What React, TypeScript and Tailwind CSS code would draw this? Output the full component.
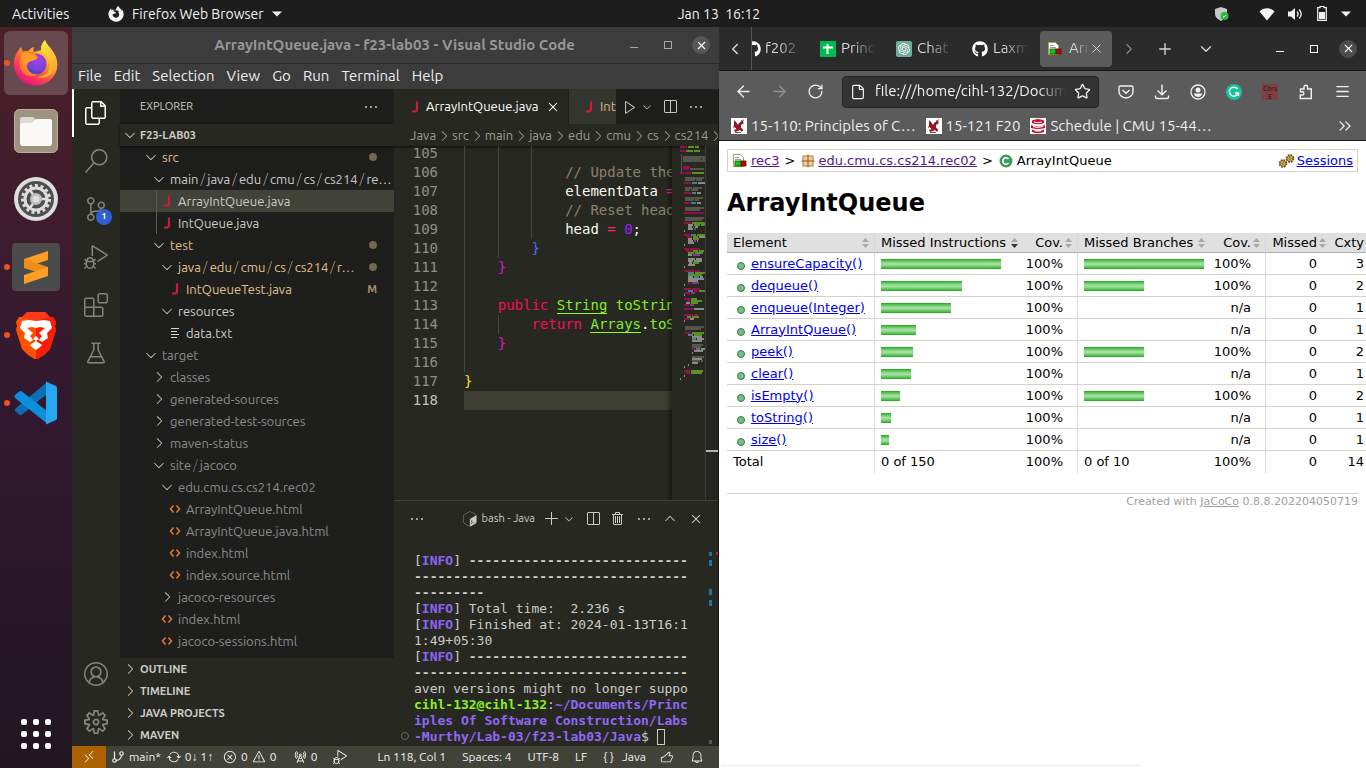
import React from "react";
import {
  VscAccount, VscAdd, VscBeaker, VscBell, VscChevronDown, VscChevronRight, VscChevronUp, VscClose,
  VscDebugAlt, VscEllipsis, VscError, VscExtensions, VscFiles, VscPlay, VscRadioTower, VscRemote, VscSearch,
  VscSettingsGear, VscSourceControl, VscSplitHorizontal, VscSync, VscTerminalBash, VscThumbsup, VscTrash, VscWarning,
} from "react-icons/vsc";
import { SiOpenai } from "react-icons/si";
import { FaFirefoxBrowser, FaGithub } from "react-icons/fa";
import {
  ArrowLeft, ArrowRight, ChevronDown, ChevronLeft, ChevronRight, ChevronsRight, Download, File, GitBranch,
  Menu, Plus, RotateCw, Star, X,
} from "lucide-react";

/* ---------- Desktop shell ---------- */

function TopBar() {
  return (
    <header className="grid h-[27px] shrink-0 grid-cols-[1fr_auto_1fr] items-center bg-[#1d1d1d] text-sm text-[#f2f2f2]">
      <div className="flex items-center pl-3">
        <button className="w-[64px] text-left">Activities</button>
        <button className="ml-8 flex items-center">
          <FaFirefoxBrowser size={16} />
          <span className="ml-2 whitespace-nowrap">Firefox Web Browser</span>
          <Caret className="ml-2" />
        </button>
      </div>
      <button className="pl-[72px] whitespace-pre">Jan 13  16:12</button>
      <div className="flex items-center justify-end pr-[15px]">
        <svg width="16" height="16" viewBox="0 0 16 16" className="mr-[29px]">
          <path d="M7 1 13 3v5c0 3-2.500 5-6 7C3.500 13 1 11 1 8V3Z" fill="#c8c8c8" />
          <circle cx="10.500" cy="10" r="4" fill="#2fb344" />
          <path d="m8.700 10 1.300 1.300 2.300-2.400" stroke="#fff" fill="none" />
        </svg>
        <svg width="16" height="14" viewBox="0 0 16 14" className="mr-3">
          <path d="M8 13.500.5 4.500C4.500.2 11.500.2 15.500 4.500Z" fill="#f2f2f2" />
        </svg>
        <svg width="16" height="14" viewBox="0 0 16 14" className="mr-[14px]">
          <path d="M1 4.500h3L8 1v12L4 9.500H1Z" fill="#f2f2f2" />
          <path d="M10 4.500c1.300 1.500 1.300 3.500 0 5M12.200 2.500c2.400 2.700 2.400 6.300 0 9" stroke="#f2f2f2" fill="none" strokeWidth="1.300" />
        </svg>
        <svg width="10" height="15" viewBox="0 0 10 15" className="mr-[14px]">
          <path d="M.7 1.700h2.300V.5h4v1.200h2.300v12.600H.7Z" stroke="#f2f2f2" fill="none" strokeWidth="1.200" />
          <path d="M2 6h6v7H2Z" fill="#f2f2f2" />
        </svg>
        <Caret />
      </div>
    </header>
  );
}

function Caret({ className = "" }: { className?: string }) {
  return (
    <svg width="10" height="6" viewBox="0 0 10 6" className={className}>
      <path d="M0 .5h10L5 5.500Z" fill="#f2f2f2" />
    </svg>
  );
}

function FirefoxLogo() {
  return (
    <svg width="46" height="48" viewBox="0 0 46 48">
      <defs>
        <linearGradient id="fx1" x1=".8" y1=".1" x2=".25" y2=".95">
          <stop offset="0" stopColor="#ffe63c" />
          <stop offset=".35" stopColor="#ffa52a" />
          <stop offset=".65" stopColor="#ff4f45" />
          <stop offset="1" stopColor="#e8107c" />
        </linearGradient>
        <radialGradient id="fx2" cx=".6" cy=".3" r=".8">
          <stop offset="0" stopColor="#a63cf0" />
          <stop offset=".6" stopColor="#7446d8" />
          <stop offset="1" stopColor="#3b3ba8" />
        </radialGradient>
        <linearGradient id="fx3" x1="0" y1="0" x2="1" y2="1">
          <stop offset="0" stopColor="#fff44f" />
          <stop offset="1" stopColor="#ff9a1f" />
        </linearGradient>
      </defs>
      <path d="M5 12 8 8l2 5c2-1 4-1 5-1 2-2 3-3 6-4-1 2-1 4 0 5l7-2c0-5 2-8 4-10 2 5 6 8 9 13 3 5 4 11 3 16A22 22 0 0 1 1 28C0 22 2 16 5 12Z" fill="url(#fx1)" />
      <circle cx="23" cy="25" r="10.500" fill="url(#fx2)" />
      <path d="M32 1c-3 3-5 7-3 11 4 4 8 8 8 14 0 7-5 12-13 12 10 3 19-4 20-13 0-5-2-9-5-13-3-4-6-6-7-11Z" fill="url(#fx3)" />
      <path d="M9 13c5-2 8 0 12 0 1 2 4 4 4 6l-6 3c-3 0-4 2-5 5 1 6 6 9 11 8-7 5-16 1-18-7-1-6 0-11 2-15Z" fill="#ff7d2e" />
      <path d="M9 14c4-1 8 0 12 2l3 4-6 2c-4 1-6 3-7 6-2-4-3-9-2-14Z" fill="#ff9f2a" />
    </svg>
  );
}

function FilesLogo() {
  return (
    <svg width="46" height="46" viewBox="0 0 46 46">
      <rect x="1.500" y="1.500" width="43" height="43" rx="5" fill="#9d937f" stroke="#b9b19f" />
      <path d="M7 20V11q0-2 2-2h10q2 0 3 2t3 1v8Z" fill="#dedad0" />
      <path d="M7 17q0-2 2-2h9q2 0 3-2t3-2h13q2 0 2 2v22q0 3-3 3H10q-3 0-3-3Z" fill="#faf9f8" />
    </svg>
  );
}

function SettingsLogo() {
  return (
    <svg width="46" height="46" viewBox="0 0 46 46">
      <circle cx="23" cy="23" r="22" fill="#dedede" />
      <circle cx="23" cy="23" r="18" fill="#4e4e4e" />
      <circle cx="23" cy="23" r="13.500" fill="none" stroke="#dedede" strokeWidth="3" strokeDasharray="3 2.650" />
      <circle cx="23" cy="23" r="11" fill="none" stroke="#dedede" strokeWidth="3" />
      <path d="M23 23h11M23 23l-6-9M23 23l-6 9" stroke="#dedede" strokeWidth="2.500" />
      <circle cx="23" cy="23" r="6" fill="#bdbdbd" />
      <circle cx="23" cy="23" r="3.500" fill="#dedede" />
    </svg>
  );
}

function SublimeLogo() {
  return (
    <svg width="48" height="48" viewBox="0 0 48 48">
      <rect width="48" height="48" rx="4" fill="#4b4b4b" />
      <path d="m36 8-24 8v9l24-8Z" fill="#ff9d26" />
      <path d="m12 16 24 8v9l-24-8Z" fill="#f08c18" />
      <path d="m36 24-24 8v9l24-8Z" fill="#ff9d26" />
    </svg>
  );
}

function BraveLogo() {
  return (
    <svg width="42" height="48" viewBox="0 0 42 48">
      <path d="M12 1h18l4 5 4 0 3 5-1 4 1 4-6 19-6 6-8 5-8-5-6-6L1 19l1-4-1-4 3-5h4Z" fill="#ff5000" />
      <path d="M21 1h9l4 5h4l3 5-1 4 1 4-6 19-6 6-8 5Z" fill="#f71d06" />
      <path d="M12 1h18l5 5-14 4L7 6Z" fill="#ff3a1c" />
      <path d="M13 9 7 10l-2 7 5 5-1 5 6 4 3-2-3-4 3-3-6-5 5-1 4 1v8l-3 3 3 2 3-2-3-3v-8l4-1 5 1-6 5 3 3-3 4 3 2 6-4-1-5 5-5-2-7-6-1-8 1Z" fill="#fff" />
      <path d="m21 30 6 4-3 3-3 2-3-2-3-3Z" fill="#fff" />
    </svg>
  );
}

function VsCodeLogo() {
  return (
    <svg width="44" height="44" viewBox="0 0 44 44">
      <path d="M1 28 33 1v12L8 33.500q-2 1-3 0L1 30Z" fill="#0a6fb5" />
      <path d="M1 14 5 10.500q1-1 3 0L33 30v12.500L1 17Q0 15.500 1 14Z" fill="#0b8fdc" />
      <path d="M32 .5 42 5q1 .5 1 2v30q0 1.500-1 2l-10 4.500Z" fill="#27a7f2" />
    </svg>
  );
}

const dockApps = [
  { name: "Firefox", icon: <FirefoxLogo />, running: true, active: true },
  { name: "Files", icon: <FilesLogo />, running: false, active: false },
  { name: "Settings", icon: <SettingsLogo />, running: false, active: false },
  { name: "Sublime Text", icon: <SublimeLogo />, running: true, active: false },
  { name: "Brave", icon: <BraveLogo />, running: true, active: false },
  { name: "Visual Studio Code", icon: <VsCodeLogo />, running: true, active: false },
];

function Dock() {
  return (
    <nav aria-label="Dock" className="flex w-[72px] shrink-0 flex-col bg-linear-to-b from-[#4b2029] via-[#32182f] to-[#211620] pt-1">
      <div className="flex flex-col gap-1">
        {dockApps.map((a) => (
          <button
            key={a.name}
            aria-label={a.name}
            className={
              a.active
                ? "relative ml-1 flex size-16 items-center justify-center rounded-md bg-[#68494f]"
                : "relative ml-1 flex size-16 items-center justify-center rounded-md"
            }
          >
            {a.running && <span className="absolute left-0 size-1.5 rounded-full bg-[#e95420]" />}
            {a.icon}
          </button>
        ))}
      </div>
      <button aria-label="Show Applications" className="mx-auto mt-auto mb-[19px] grid grid-cols-3 gap-1.5">
        {Array.from({ length: 9 }, (_, i) => (
          <span key={i} className="size-1.5 rounded-[2px] bg-white" />
        ))}
      </button>
    </nav>
  );
}

/* ---------- Code editor window ---------- */

function JIcon() {
  return (
    <svg width="8" height="12" viewBox="0 0 8 12" className="shrink-0">
      <path d="M6 .5v7.500q0 2.500-2.500 2.500H1" fill="none" stroke="#cc1b3c" strokeWidth="2.200" />
    </svg>
  );
}

type Kind = "open" | "closed" | "java" | "html" | "txt";
type Row = { name: string; level: number; kind: Kind; tone: "normal" | "mod" | "dim"; mark?: "dot" | "M"; selected?: boolean; guide?: boolean };

const tree: Row[] = [
  { name: "src", level: 0, kind: "open", tone: "mod", mark: "dot" },
  { name: "main/java/edu/cmu/cs/cs214/re…", level: 1, kind: "open", tone: "normal" },
  { name: "ArrayIntQueue.java", level: 2, kind: "java", tone: "normal", selected: true, guide: true },
  { name: "IntQueue.java", level: 2, kind: "java", tone: "normal", guide: true },
  { name: "test", level: 1, kind: "open", tone: "mod", mark: "dot" },
  { name: "java/edu/cmu/cs/cs214/r…", level: 2, kind: "open", tone: "mod", mark: "dot" },
  { name: "IntQueueTest.java", level: 3, kind: "java", tone: "mod", mark: "M" },
  { name: "resources", level: 2, kind: "open", tone: "normal" },
  { name: "data.txt", level: 3, kind: "txt", tone: "normal" },
  { name: "target", level: 0, kind: "open", tone: "dim" },
  { name: "classes", level: 1, kind: "closed", tone: "dim" },
  { name: "generated-sources", level: 1, kind: "closed", tone: "dim" },
  { name: "generated-test-sources", level: 1, kind: "closed", tone: "dim" },
  { name: "maven-status", level: 1, kind: "closed", tone: "dim" },
  { name: "site/jacoco", level: 1, kind: "open", tone: "dim" },
  { name: "edu.cmu.cs.cs214.rec02", level: 2, kind: "open", tone: "dim" },
  { name: "ArrayIntQueue.html", level: 3, kind: "html", tone: "dim" },
  { name: "ArrayIntQueue.java.html", level: 3, kind: "html", tone: "dim" },
  { name: "index.html", level: 3, kind: "html", tone: "dim" },
  { name: "index.source.html", level: 3, kind: "html", tone: "dim" },
  { name: "jacoco-resources", level: 2, kind: "closed", tone: "dim" },
  { name: "index.html", level: 2, kind: "html", tone: "dim" },
  { name: "jacoco-sessions.html", level: 2, kind: "html", tone: "dim" },
];

const indents = ["pl-[23px]", "pl-[31px]", "pl-[39px]", "pl-[47px]"];
const tones = { normal: "text-[#ccccc7]", mod: "text-[#e2c08d]", dim: "text-[#8c8c8c]" };

function TreeIcon({ kind }: { kind: Kind }) {
  if (kind === "open") return <VscChevronDown size={16} className="text-[#c5c5c5]" />;
  if (kind === "closed") return <VscChevronRight size={16} className="text-[#c5c5c5]" />;
  if (kind === "java") return <JIcon />;
  if (kind === "html")
    return (
      <svg width="12" height="10" viewBox="0 0 12 10" fill="none" stroke="#e37933" strokeWidth="1.500">
        <path d="M4.500 1.500 1.500 5l3 3.500M7.500 1.500l3 3.500-3 3.500" />
      </svg>
    );
  return (
    <svg width="10" height="10" viewBox="0 0 10 10" stroke="#d4d7d6">
      <path d="M1 .5h8M1 3.500h6M1 6.500h8M1 9.500h6" />
    </svg>
  );
}

function TreeRow({ row }: { row: Row }) {
  const parts = row.name.split("/");
  return (
    <li>
      <button
        className={`relative flex h-[22px] w-full items-center pr-[17px] text-[13px] whitespace-nowrap ${indents[row.level]} ${tones[row.tone]} ${row.selected ? "bg-[#414339]" : ""}`}
      >
        {row.guide && <span className="absolute inset-y-0 left-9 w-px bg-[#5a5b55]" />}
        <span className="mr-[3px] flex w-4 shrink-0 justify-center">
          <TreeIcon kind={row.kind} />
        </span>
        <span className="pt-0.5">
          {parts.map((p, i) => (
            <React.Fragment key={i}>
              {i > 0 && <span className="mx-[2px] opacity-60">/</span>}
              {p}
            </React.Fragment>
          ))}
        </span>
        {row.mark === "dot" && <span className="ml-auto size-2 shrink-0 rounded-full bg-[#73694f]" />}
        {row.mark === "M" && <span className="ml-auto text-[11px] font-bold text-[#a8926e]">M</span>}
      </button>
    </li>
  );
}

function Sidebar() {
  return (
    <aside className="flex w-[274px] shrink-0 flex-col bg-[#1e1f1c]">
      <div className="flex h-[35px] shrink-0 items-center justify-between pr-[15px] pl-5 text-[11px] text-[#ccccc7]">
        <h2>EXPLORER</h2>
        <button aria-label="Views and More Actions"><VscEllipsis size={16} /></button>
      </div>
      <button className="flex h-[22px] shrink-0 items-center bg-[#272822] pl-0.5 text-[11px] font-bold text-[#ccccc7] shadow-[0_1px_3px_#000a]">
        <VscChevronDown size={16} />
        <span className="ml-[2px]">F23-LAB03</span>
      </button>
      <ul className="min-h-0 flex-1 overflow-hidden">
        {tree.map((r, i) => <TreeRow key={i} row={r} />)}
      </ul>
      <div className="shrink-0 bg-[#272822]">
        {["OUTLINE", "TIMELINE", "JAVA PROJECTS", "MAVEN"].map((s) => (
          <button key={s} className="flex h-[22px] w-full items-center pl-0.5 text-[11px] font-bold text-[#ccccc7]">
            <VscChevronRight size={16} />
            <span className="ml-[2px]">{s}</span>
          </button>
        ))}
      </div>
    </aside>
  );
}

function ActivityBar() {
  const item = "flex h-12 w-full items-center justify-center";
  return (
    <nav aria-label="Activity Bar" className="flex w-12 shrink-0 flex-col bg-[#272822] text-[#84857f]">
      <button aria-label="Explorer" className={`${item} border-l-2 border-white pr-0.5 text-white`}><VscFiles size={24} /></button>
      <button aria-label="Search" className={item}><VscSearch size={24} /></button>
      <button aria-label="Source Control" className={`relative ${item}`}>
        <VscSourceControl size={24} />
        <span className="absolute right-2 bottom-2 flex size-4 items-center justify-center rounded-full bg-[#2f5fd0] text-[9px] font-bold text-white">1</span>
      </button>
      <button aria-label="Run and Debug" className={item}><VscDebugAlt size={24} /></button>
      <button aria-label="Extensions" className={item}><VscExtensions size={24} /></button>
      <button aria-label="Testing" className={item}><VscBeaker size={24} /></button>
      <button aria-label="Accounts" className={`mt-auto ${item}`}><VscAccount size={24} /></button>
      <button aria-label="Manage" className={item}><VscSettingsGear size={24} /></button>
    </nav>
  );
}

const K = "text-[#f92672]";
const C = "text-[#88846f]";
const W = "text-[#f8f8f2]";

const code: { n: number; guides: number; line: React.ReactNode }[] = [
  { n: 105, guides: 3, line: "" },
  { n: 106, guides: 3, line: <span className={C}>{"            // Update the"}</span> },
  { n: 107, guides: 3, line: <><span className={W}>{"            elementData "}</span><span className={K}>=</span></> },
  { n: 108, guides: 3, line: <span className={C}>{"            // Reset head"}</span> },
  { n: 109, guides: 3, line: <><span className={W}>{"            head "}</span><span className={K}>=</span> <span className="text-[#a020f8]">0</span><span className={W}>;</span></> },
  { n: 110, guides: 2, line: <span className="text-[#3c78f0]">{"        }"}</span> },
  { n: 111, guides: 1, line: <span className="text-[#da18c8]">{"    }"}</span> },
  { n: 112, guides: 1, line: "" },
  { n: 113, guides: 1, line: <>{"    "}<span className="text-[#f90a5e]">public</span> <span className="border-b border-[#8cff1a] text-[#86ee22]">String</span> <span className="text-[#86ee22]">toString</span></> },
  { n: 114, guides: 2, line: <>{"        "}<span className="text-[#f90a5e]">return</span> <span className="border-b border-[#8cff1a] text-[#86ee22]">Arrays</span><span className={W}>.</span><span className="text-[#86ee22]">toS</span></> },
  { n: 115, guides: 1, line: <span className="text-[#da18c8]">{"    }"}</span> },
  { n: 116, guides: 1, line: "" },
  { n: 117, guides: 0, line: <span className="text-[#ffe000]">{"}"}</span> },
  { n: 118, guides: 0, line: "" },
];

/* Each entry: y, x, then colour/width pairs of the drawn runs. */
const mini: [number, number, string][] = [
  [0, 0, "p7 g6 g4"], [4, 0, "p5 g7 g6"],
  [10, 3, "k22"], [12, 3, "k18 k3"], [14, 3, "k22"], [20, 3, "p7"], [22, 3, "p6 k14"],
  [26, 0, "p4 p6 g12"], [31, 6, "k18"], [33, 6, "k9 k6"], [36, 4, "p7 c5 w7"],
  [41, 6, "k6 k9"], [43, 6, "k4 k7"], [46, 4, "p7 c4 w4"], [51, 6, "k17"], [53, 6, "k8 k4"], [56, 4, "p6 c5 w4"],
  [61, 6, "k18"], [63, 6, "k14"], [66, 4, "p14 p5"], [71, 6, "k18"], [73, 6, "k16"],
  [76, 4, "p7 g13"], [78, 8, "w5 g6 g5"], [80, 8, "w4 v1 w3"], [82, 8, "w5 v2"], [84, 4, "w1"],
  [88, 4, "p6 c5 g9"], [90, 7, "p5 g5 w6"], [92, 8, "w4 g6"], [94, 8, "w5 v2 w1"], [96, 8, "w6"], [98, 4, "w1"],
  [102, 4, "p5 p10"], [104, 6, "p6 g5 g5"], [106, 8, "g6 g8"], [108, 8, "w4 v7"],
  [112, 8, "w7 w6"], [114, 8, "w5 w8"], [116, 9, "w3 g6"], [118, 8, "w7"], [120, 4, "w1"],
  [124, 4, "p10 p5"], [126, 8, "c6 g10"], [128, 8, "g14"], [130, 8, "w5 c5 w3"], [132, 8, "w16"], [134, 8, "w10"], [136, 8, "p3 v7"], [138, 4, "w1"],
  [142, 4, "p7 p8"], [144, 8, "c5 p4 g7"], [146, 4, "p6 v4"], [148, 4, "w1"],
  [152, 4, "p6 g6"], [154, 7, "p3 g11"], [156, 6, "w4 g7"], [158, 4, "p5 v4"], [162, 4, "p9 w10"],
  [168, 4, "p9 p4"], [170, 7, "g4 g7"], [172, 4, "p5 w4"], [174, 4, "w1"],
  [180, 6, "k18"], [182, 6, "k15"], [186, 4, "p7 g12"], [188, 8, "c5 g8"], [190, 12, "w10"], [192, 12, "c4 w7"], [194, 12, "w10"],
  [198, 12, "k11"], [200, 12, "k9"], [202, 12, "p3 c4 w4"], [204, 14, "w9"], [206, 12, "w1"],
  [210, 12, "k12"], [212, 12, "w10"], [214, 12, "k8 v2"], [216, 12, "w6"], [218, 8, "w1"], [220, 4, "w1"],
  [224, 4, "p6 g12"], [226, 6, "p4 g11"], [229, 4, "w1"], [232, 0, "w1"],
];
const miniColors: Record<string, string> = { p: "#93104c", g: "#5c8f22", c: "#46808c", w: "#8a8b85", k: "#55564a", v: "#6a4394" };

function Minimap() {
  const rects: React.ReactNode[] = [];
  mini.forEach(([y, x, runs], i) => {
    let cx = x + 8;
    runs.split(" ").forEach((r, j) => {
      const w = Math.min(Number(r.slice(1)), 33 - cx);
      if (w > 0) rects.push(<rect key={`${i}-${j}`} x={cx} y={y} width={w} height="2" fill={miniColors[r[0]]} />);
      cx += Number(r.slice(1)) + 1;
    });
  });
  return (
    <div className="w-[34px] shrink-0 border-r border-[#3c3d38]">
      <svg width="33" height="354" viewBox="0 0 33 354">
        {rects}
        <path d="M9.500 8v18M13.500 31v4M13.500 41v4M13.500 51v4M13.500 61v4M13.500 71v4M13.500 180v5" stroke="#55564a" />
      </svg>
    </div>
  );
}

function Editor() {
  return (
    <section className="flex min-w-0 flex-1 flex-col border-r border-[#161616] bg-[#272822]">
      <div className="flex h-[35px] shrink-0 bg-[#1e1f1c] text-[13px]">
        <button className="flex w-[175px] shrink-0 items-center border-r border-[#1e1f1c] bg-[#272822] pl-[17px] whitespace-nowrap text-white">
          <JIcon />
          <span className="ml-[7px]">ArrayIntQueue.java</span>
          <VscClose size={16} className="ml-[7px]" />
        </button>
        <button className="flex min-w-0 flex-1 items-center overflow-hidden bg-[#34352f] pl-4 text-[#d9b97e]">
          <JIcon />
          <span className="ml-[7px] whitespace-nowrap">IntQueueTest.java</span>
        </button>
        <div className="flex w-[102px] shrink-0 items-center text-[#c5c5c5]">
          <button aria-label="Run Java" className="ml-1.5"><VscPlay size={16} /></button>
          <button aria-label="Run options" className="ml-[3px]"><VscChevronDown size={12} /></button>
          <button aria-label="Split Editor" className="ml-[9px]"><VscSplitHorizontal size={16} /></button>
          <button aria-label="More Actions" className="ml-[10px]"><VscEllipsis size={16} /></button>
        </div>
      </div>
      <div className="flex h-[22px] shrink-0 items-center overflow-hidden pt-0.5 pl-4 text-[13px] whitespace-nowrap text-[#9c9d97]">
        {["Java", "src", "main", "java", "edu", "cmu", "cs", "cs214"].map((b, i) => (
          <React.Fragment key={i}>
            <a href="#">{b}</a>
            <VscChevronRight size={16} className="shrink-0" />
          </React.Fragment>
        ))}
      </div>
      <div className="flex min-h-0 flex-1 overflow-hidden shadow-[inset_0_3px_3px_-2px_#000a]">
        <div className="-mt-0.5 min-w-0 flex-1 overflow-hidden font-['DejaVu_Sans_Mono',monospace] text-sm leading-[19px]">
          {code.map((l) => (
            <div key={l.n} className="flex h-[19px]">
              <span className={l.n === 118 ? "w-[44px] shrink-0 text-right text-[#c2c2bf]" : "w-[44px] shrink-0 text-right text-[#90908a]"}>{l.n}</span>
              <div className={l.n === 118 ? "relative ml-[26px] min-w-0 flex-1 bg-[#3e3d32]" : "relative ml-[26px] min-w-0 flex-1"}>
                {l.guides > 0 && <span className="absolute inset-y-0 left-0 w-px bg-[#464741]" />}
                {l.guides > 1 && <span className="absolute inset-y-0 left-[34px] w-px bg-[#464741]" />}
                {l.guides > 2 && <span className="absolute inset-y-0 left-[67px] w-px bg-[#464741]" />}
                <pre className="font-['DejaVu_Sans_Mono',monospace]">{l.line}</pre>
              </div>
            </div>
          ))}
        </div>
        <div className="z-10 -ml-1.5 w-1.5 shrink-0 bg-linear-to-r from-transparent to-[#00000066]" />
        <Minimap />
        <div className="w-3 shrink-0 bg-[#242520] pt-[304px]">
          <div className="h-0.5 bg-[#b4b5ad]" />
        </div>
      </div>
      <Terminal />
    </section>
  );
}

function Terminal() {
  const I = (
    <>
      <span>[</span>
      <b className="text-[#8a63f5]">INFO</b>
      <span>] </span>
    </>
  );
  const P = "text-[#9068f5]";
  return (
    <div className="flex h-[246px] shrink-0 flex-col border-t border-[#414339]">
      <div className="flex h-[35px] shrink-0 items-center pr-[14px] pl-[15px] text-[11px] text-[#ccccc7]">
        <button aria-label="Panel views"><VscEllipsis size={16} /></button>
        <button className="ml-auto flex items-center whitespace-nowrap"><VscTerminalBash size={16} className="mr-1" />bash - Java</button>
        <button aria-label="New Terminal" className="ml-[9px]"><VscAdd size={16} /></button>
        <button aria-label="Launch Profile" className="ml-[3px]"><VscChevronDown size={12} /></button>
        <button aria-label="Split Terminal" className="ml-2.5"><VscSplitHorizontal size={16} /></button>
        <button aria-label="Kill Terminal" className="ml-[9px]"><VscTrash size={16} /></button>
        <button aria-label="More" className="ml-2.5"><VscEllipsis size={16} /></button>
        <button aria-label="Maximize Panel" className="ml-2.5"><VscChevronUp size={16} /></button>
        <button aria-label="Close Panel" className="ml-2.5"><VscClose size={16} /></button>
      </div>
      <div className="flex min-h-0 flex-1">
        <div className="flex w-5 flex-col justify-end pb-1.5 pl-[7px]">
          <span className="size-2 rounded-full border border-[#6a6b65]" />
        </div>
        <pre className="min-w-0 flex-1 overflow-hidden pt-[17px] font-['DejaVu_Sans_Mono',monospace] text-[13px] leading-4 text-[#ccccc7]">
          {I}<b>{"-".repeat(28)}</b>{"\n"}
          <b>{"-".repeat(35)}</b>{"\n"}
          <b>{"-".repeat(9)}</b>{"\n"}
          {I}Total time:  2.236 s{"\n"}
          {I}Finished at: 2024-01-13T16:1{"\n"}
          1:49+05:30{"\n"}
          {I}<b>{"-".repeat(28)}</b>{"\n"}
          <b>{"-".repeat(35)}</b>{"\n"}
          aven versions might no longer suppo{"\n"}
          <b className="text-[#8cf01e]">cihl-132@cihl-132</b>:<b className={P}>~/Documents/Princ</b>{"\n"}
          <b className={P}>iples Of Software Construction/Labs</b>{"\n"}
          <b className={P}>-Murthy/Lab-03/f23-lab03/Java</b>$ <span className="inline-block h-4 w-2 border border-[#ccccc7] align-top" />
        </pre>
        <svg width="10" height="210" viewBox="0 0 10 210" className="shrink-0">
          <path d="M1 16h3v4H1zM1 24h3v6H1zM1 53h3v6H1zM1 64h3v6H1z" fill="#1b74a5" />
          <path d="M8 16h2v3H8z" fill="#c5173a" />
          <path d="M1 204h3v4H1z" fill="#55564f" />
        </svg>
      </div>
    </div>
  );
}

function StatusBar() {
  return (
    <footer className="flex h-[22px] shrink-0 items-center bg-[#414339] text-xs whitespace-nowrap text-[#f0f0ee]">
      <button aria-label="Remote" className="flex h-full w-[34px] items-center justify-center bg-[#ac6200]"><VscRemote size={14} /></button>
      <button className="ml-[5px] flex items-center gap-1"><GitBranch size={14} />main*</button>
      <button className="ml-1.5 flex items-center gap-1"><VscSync size={14} />0↓ 1↑</button>
      <button className="ml-auto flex items-center gap-1"><VscError size={14} />0 <VscWarning size={14} />0</button>
      <button className="ml-4 flex items-center gap-1"><VscRadioTower size={14} />0</button>
      <button aria-label="Debug" className="ml-4"><VscDebugAlt size={14} /></button>
      <button className="ml-[30px]">Ln 118, Col 1</button>
      <button className="ml-4">Spaces: 4</button>
      <button className="ml-4">UTF-8</button>
      <button className="ml-4">LF</button>
      <button className="ml-4 flex gap-2"><span>{"{ }"}</span>Java</button>
      <button aria-label="Feedback" className="ml-[14px]"><VscThumbsup size={14} /></button>
      <button aria-label="Notifications" className="mr-[15px] ml-4"><VscBell size={14} /></button>
    </footer>
  );
}

function CodeWindow() {
  return (
    <main className="flex min-w-0 flex-1 flex-col">
      <div className="flex h-[37px] shrink-0 items-center border-b border-[#2b2b2b] bg-[#3c3c3c] pr-[9px]">
        <h1 className="min-w-0 flex-1 pl-[103px] text-center text-[15px] font-bold whitespace-nowrap text-[#969696]">ArrayIntQueue.java - f23-lab03 - Visual Studio Code</h1>
        <div className="flex w-[96px] items-center justify-end">
          <button aria-label="Minimize" className="mt-1 h-px w-2 bg-[#a8a8a8]" />
          <button aria-label="Maximize" className="ml-[26px] size-2 border border-[#a8a8a8]" />
          <button aria-label="Close" className="ml-5 flex size-[18px] items-center justify-center rounded-full bg-[#565656] text-white"><X size={13} /></button>
        </div>
      </div>
      <div className="flex h-[25px] shrink-0 items-center gap-3 bg-[#3c3c3c] pl-1.5 text-[15px] text-[#ececec]">
        {["File", "Edit", "Selection", "View", "Go", "Run", "Terminal", "Help"].map((m) => <button key={m}>{m}</button>)}
      </div>
      <div className="flex min-h-0 flex-1">
        <ActivityBar />
        <Sidebar />
        <Editor />
      </div>
      <StatusBar />
    </main>
  );
}

/* ---------- Browser window ---------- */

function ReportIcon() {
  return (
    <svg width="16" height="16" viewBox="0 0 16 16" className="shrink-0">
      <path d="M1.500 1.500h7l3 3v9h-10Z" fill="#fff" stroke="#b8964a" />
      <path d="M3 4.500h4M3 6.500h6" stroke="#7f9cc9" />
      <rect x="3" y="8" width="6" height="5" fill="#12c712" stroke="#0a5f0a" strokeWidth=".8" />
      <rect x="9" y="8" width="5" height="5" fill="#b00c0c" stroke="#5f0a0a" strokeWidth=".8" />
    </svg>
  );
}

function Tartan() {
  return (
    <svg width="16" height="16" viewBox="0 0 16 16" className="shrink-0">
      <rect width="16" height="16" fill="#fff" />
      <path d="M3 3l2 1 2 3 1-2 2-1 3-3-1 3 1 1-3 2v3l2 1-1 3-2-2-2 1-3 1-1-2 3-1-2-2-2 1 1-3Z" fill="#9d1220" />
      <path d="M3.500 2.500 5 6M11 2l-2 4M4 9l2 2M4 14.500h6M10 11l2 2" stroke="#333" fill="none" strokeWidth=".8" />
    </svg>
  );
}

function Database() {
  return (
    <svg width="16" height="16" viewBox="0 0 16 16" className="shrink-0">
      <rect width="16" height="16" fill="#fff" />
      <path d="M2 2.500q6-3 12 0v2.500q-6 2.500-12 0ZM1 7q7 3 14 0v3q-7 2-14 0ZM2 11.500q6 3 12 0V14q-6 2.500-12 0Z" fill="#c8102e" />
      <path d="M4 4q4 1.500 8 0M3 8.500l4 1 6-1M5 13h6" stroke="#fff" fill="none" />
    </svg>
  );
}

const fade = "min-w-0 flex-1 overflow-hidden whitespace-nowrap text-left [mask-image:linear-gradient(to_right,#000_30%,transparent_100%)]";

function TabStrip() {
  const tab = "flex h-full w-[76px] shrink-0 items-center pr-3 pl-2";
  return (
    <div className="flex h-11 shrink-0 items-center border-b border-[#191919] bg-[#2b2b2b] text-[15px] text-[#d8d8d8]">
      <button aria-label="Scroll tabs left" className="flex h-full w-[33px] shrink-0 items-center justify-center border-r border-[#575757]"><ChevronLeft size={18} /></button>
      <button className="flex h-full w-[60px] shrink-0 items-center pr-2">
        <span className="flex w-[9px] shrink-0 justify-end overflow-hidden text-white"><FaGithub size={16} className="shrink-0" /></span>
        <span className={`ml-1 ${fade}`}>f202</span>
      </button>
      <button className={tab}>
        <svg width="16" height="16" viewBox="0 0 16 16" className="shrink-0">
          <rect width="16" height="16" rx="1" fill="#00ba52" />
          <path d="M3 6.500h10M7.500 3v10" stroke="#fff" strokeWidth="2" />
        </svg>
        <span className={`ml-[5px] ${fade}`}>Princ</span>
      </button>
      <button className={tab}>
        <span className="flex size-4 shrink-0 items-center justify-center rounded-xs bg-[#74aa9c] text-white"><SiOpenai size={12} /></span>
        <span className={`ml-[5px] ${fade}`}>Chat</span>
      </button>
      <button className={tab}>
        <FaGithub size={16} className="shrink-0 text-white" />
        <span className={`ml-[5px] ${fade}`}>Laxm</span>
      </button>
      <button className="flex h-9 w-[72px] shrink-0 items-center rounded-sm bg-[#5b5b5b] pr-2 pl-[7px]">
        <ReportIcon />
        <span className={`ml-1.5 ${fade}`}>Arr</span>
        <X size={15} strokeWidth={1.500} className="shrink-0" />
      </button>
      <button aria-label="Scroll tabs right" className="ml-2 text-[#8a8a8a]"><ChevronRight size={18} strokeWidth={1.500} /></button>
      <button aria-label="New tab" className="ml-[18px]"><Plus size={18} strokeWidth={1.800} /></button>
      <button aria-label="List all tabs" className="ml-[23px]"><ChevronDown size={18} strokeWidth={1.800} /></button>
      <div className="ml-auto flex items-center pr-[9px] text-white">
        <button aria-label="Minimize" className="mt-1.5 h-px w-2 bg-white" />
        <button aria-label="Maximize" className="ml-[26px] size-2 border border-white" />
        <button aria-label="Close" className="ml-[21px] flex size-[18px] items-center justify-center rounded-full bg-[#4d4d4d]"><X size={13} /></button>
      </div>
    </div>
  );
}

function NavBar() {
  const b = "flex h-9 w-9 shrink-0 items-center justify-center";
  return (
    <div className="flex h-[41px] shrink-0 items-center bg-[#5b5b5b] pr-1.5 pl-1.5 text-[#f2f2f2]">
      <button aria-label="Back" className={b}><ArrowLeft size={19} strokeWidth={1.600} /></button>
      <button aria-label="Forward" className={`${b} text-[#929292]`}><ArrowRight size={19} strokeWidth={1.600} /></button>
      <button aria-label="Reload" className={b}><RotateCw size={17} strokeWidth={1.800} /></button>
      <div className="ml-[9px] flex h-8 min-w-0 flex-1 items-center rounded-sm border border-[#242424] bg-[#333] px-[7px]">
        <File size={16} strokeWidth={1.800} className="shrink-0" />
        <input
          aria-label="Address"
          readOnly
          value="file:///home/cihl-132/Docum"
          className="mr-2 ml-[9px] min-w-0 flex-1 bg-transparent text-[15px] outline-none [mask-image:linear-gradient(to_right,#000_85%,transparent)]"
        />
        <button aria-label="Bookmark this page"><Star size={17} strokeWidth={1.800} /></button>
      </div>
      <button aria-label="Pocket" className={`${b} ml-[9px]`}>
        <svg width="16" height="16" viewBox="0 0 16 16" fill="none" stroke="currentColor" strokeWidth="1.400">
          <path d="M2.500 2h11q1.500 0 1.500 1.500V7.500a7 6.500 0 0 1-14 0v-4Q1 2 2.500 2ZM4.500 6 8 9.300 11.500 6" />
        </svg>
      </button>
      <button aria-label="Downloads" className={b}>
        <svg width="16" height="16" viewBox="0 0 16 16" fill="none" stroke="currentColor" strokeWidth="1.400">
          <path d="M8 .5v10M3.500 6.500 8 10.800l4.500-4.300M1.500 11.500V13q0 1.500 1.500 1.500h10q1.500 0 1.500-1.500v-1.500" />
        </svg>
      </button>
      <button aria-label="Account" className={b}>
        <svg width="16" height="16" viewBox="0 0 16 16" fill="none" stroke="currentColor" strokeWidth="1.300">
          <circle cx="8" cy="8" r="7" />
          <circle cx="8" cy="6" r="2.500" fill="currentColor" stroke="none" />
          <path d="M3.700 9.500h8.600Q11 13 8 13T3.700 9.500Z" fill="currentColor" stroke="none" />
        </svg>
      </button>
      <button aria-label="Grammar checker" className={b}>
        <svg width="16" height="16" viewBox="0 0 16 16" fill="none">
          <circle cx="8" cy="8" r="8" fill="#15c39a" />
          <path d="M11.500 5A4.500 4.500 0 1 0 12 9.500M9 9h3.500v3" stroke="#fff" strokeWidth="1.400" />
        </svg>
      </button>
      <button aria-label="CORS" className={b}>
        <span className="flex size-4 flex-col items-center justify-center bg-[#7c4040] text-[7px] leading-[8px] text-[#1c1010]">
          <span>Cors</span>
          <span>E</span>
        </span>
      </button>
      <button aria-label="Extensions" className={b}>
        <svg width="16" height="16" viewBox="0 0 16 16" fill="none" stroke="currentColor" strokeWidth="1.400">
          <path d="M2.500 5H6V3a1.800 1.800 0 0 1 3.600 0v2h3.700v9.500h-11V11h2a1.600 1.600 0 0 0 0-3.200h-1.800Z" />
        </svg>
      </button>
      <button aria-label="Menu" className={b}><Menu size={17} strokeWidth={1.800} /></button>
    </div>
  );
}

function BookmarksBar() {
  return (
    <div className="flex h-[29px] shrink-0 items-center border-b border-[#1d1d1d] bg-[#5b5b5b] pr-[11px] pl-3 text-[15px] whitespace-nowrap text-[#efefef]">
      <a href="#" className="flex items-center gap-1"><Tartan />15-110: Principles of C…</a>
      <a href="#" className="ml-2.5 flex items-center gap-1"><Tartan />15-121 F20</a>
      <a href="#" className="ml-2.5 flex items-center gap-1"><Database />Schedule | CMU 15-44…</a>
      <button aria-label="More bookmarks" className="ml-auto"><ChevronsRight size={20} strokeWidth={1.500} /></button>
    </div>
  );
}

/* ---------- Coverage report ---------- */

const methods: [string, number, string, number, string, number, number][] = [
  ["ensureCapacity()", 120, "100%", 120, "100%", 0, 3],
  ["dequeue()", 81, "100%", 60, "100%", 0, 2],
  ["enqueue(Integer)", 70, "100%", 0, "n/a", 0, 1],
  ["ArrayIntQueue()", 35, "100%", 0, "n/a", 0, 1],
  ["peek()", 32, "100%", 60, "100%", 0, 2],
  ["clear()", 30, "100%", 0, "n/a", 0, 1],
  ["isEmpty()", 19, "100%", 60, "100%", 0, 2],
  ["toString()", 10, "100%", 0, "n/a", 0, 1],
  ["size()", 8, "100%", 0, "n/a", 0, 1],
];

function SortIcon({ down = false }: { down?: boolean }) {
  return (
    <svg width="7" height="10" viewBox="0 0 7 10" className="shrink-0">
      <path d="M0 4h7L3.500 0Z" fill="#a8a8a8" />
      <path d="M0 6h7L3.500 10Z" fill={down ? "#3b2f26" : "#a8a8a8"} />
    </svg>
  );
}

function Bar({ width }: { width: number }) {
  if (!width) return null;
  return (
    <div
      className="h-2.5 bg-linear-to-b from-[#08ac08] via-[#ace6ac] to-[#08ac08]"
      style={{ width }}
    />
  );
}

function Report() {
  const div = "border-l border-[#d9d9d9]";
  const num = "pr-[14px] text-right";
  const th = "p-0 font-normal";
  const inner = "flex items-center gap-0.5 pr-[5px]";
  return (
    <div className="relative min-h-0 flex-1 overflow-hidden bg-white px-2 pt-2 font-['DejaVu_Sans',sans-serif] text-[13px] text-black">
      <nav className="flex h-[23px] items-center border border-[#d6d3ce] px-1 whitespace-nowrap">
        <ReportIcon />
        <a href="#" className="ml-[3px] text-[#551a8b] underline">rec3</a>
        <span className="mx-[5px]">&gt;</span>
        <svg width="16" height="16" viewBox="0 0 16 16">
          <rect x="3" y="3" width="10" height="10" fill="#f2cfa0" stroke="#b5763a" />
          <path d="M8 1.500v13M1.500 8h13" stroke="#8a5220" />
        </svg>
        <a href="#" className="ml-0.5 text-[#551a8b] underline">edu.cmu.cs.cs214.rec02</a>
        <span className="mx-[5px]">&gt;</span>
        <svg width="16" height="16" viewBox="0 0 16 16">
          <circle cx="8" cy="8" r="6.500" fill="#43995f" />
          <path d="M10.500 6a3.200 3.200 0 1 0 0 4" stroke="#fff" strokeWidth="1.600" fill="none" />
        </svg>
        <span className="ml-[3px]">ArrayIntQueue</span>
        <a href="#" className="ml-auto flex items-center gap-0.5 text-[#0000ee] underline">
          <svg width="17" height="16" viewBox="0 0 17 16" fill="#e5b84f" stroke="#5e4212">
            <circle cx="5" cy="10.500" r="3.300" strokeWidth="2" strokeDasharray="1.600 1" />
            <circle cx="5" cy="10.500" r="2.800" stroke="#8a6420" strokeWidth=".8" />
            <circle cx="5" cy="10.500" r="1" fill="#fff" strokeWidth=".8" />
            <circle cx="12" cy="5.500" r="3.300" strokeWidth="2" strokeDasharray="1.600 1" />
            <circle cx="12" cy="5.500" r="2.800" stroke="#8a6420" strokeWidth=".8" />
            <circle cx="12" cy="5.500" r="1" fill="#fff" strokeWidth=".8" />
          </svg>
          Sessions
        </a>
      </nav>
      <h1 className="mt-[17px] text-2xl leading-7 font-bold">ArrayIntQueue</h1>
      <table className="mt-4 w-[651px] table-fixed border-separate border-spacing-0 leading-4 whitespace-nowrap">
        <colgroup>
          <col className="w-[147px]" />
          <col className="w-[149px]" />
          <col className="w-[54px]" />
          <col className="w-[133px]" />
          <col className="w-[55px]" />
          <col className="w-[66px]" />
          <col className="w-[47px]" />
        </colgroup>
        <thead>
          <tr className="h-5 bg-[#e0e0e0] *:border-b *:border-b-[#b0b0b0]">
            <th className={th}><div className={`${inner} justify-between pl-1.5`}>Element<SortIcon /></div></th>
            <th className={`${th} ${div}`}><div className={`${inner} justify-between pl-1.5`}>Missed Instructions<SortIcon down /></div></th>
            <th className={th}><div className={`${inner} justify-end`}>Cov.<SortIcon /></div></th>
            <th className={`${th} ${div}`}><div className={`${inner} justify-between pl-1.5`}>Missed Branches<SortIcon /></div></th>
            <th className={th}><div className={`${inner} justify-end`}>Cov.<SortIcon /></div></th>
            <th className={`${th} ${div}`}><div className={`${inner} justify-end`}>Missed<SortIcon /></div></th>
            <th className={th}><div className={`${inner} justify-end`}>Cxty<SortIcon /></div></th>
          </tr>
        </thead>
        <tbody>
          {methods.map(([name, ins, cov, br, bcov, missed, cxty]) => (
            <tr key={name} className="h-[22px] *:border-b *:border-b-[#d6d3ce]">
              <td className="pl-1.5">
                <div className="flex items-center">
                  <svg width="16" height="16" viewBox="0 0 16 16" className="mr-0.5">
                    <circle cx="8" cy="10" r="3.500" fill="#7dbb84" stroke="#2f7d4a" />
                  </svg>
                  <a href="#" className="text-[#0000ee] underline">{name}</a>
                </div>
              </td>
              <td className={`${div} pl-1.5`}><Bar width={ins} /></td>
              <td className={num}>{cov}</td>
              <td className={`${div} pl-1.5`}><Bar width={br} /></td>
              <td className={num}>{bcov}</td>
              <td className={`${div} ${num}`}>{missed}</td>
              <td className={num}>{cxty}</td>
            </tr>
          ))}
        </tbody>
        <tfoot>
          <tr className="h-[22px]">
            <td className="pl-1.5">Total</td>
            <td className={`${div} pl-1.5`}>0 of 150</td>
            <td className={num}>100%</td>
            <td className={`${div} pl-1.5`}>0 of 10</td>
            <td className={num}>100%</td>
            <td className={`${div} ${num}`}>0</td>
            <td className={num}>14</td>
          </tr>
        </tfoot>
      </table>
      <p className="mt-5 border-t border-[#d6d3ce] text-right text-[11px] leading-4 text-[#a0a0a0]">
        Created with <a href="#" className="underline">JaCoCo</a> 0.8.8.202204050719
      </p>
      <div className="absolute bottom-px left-0.5 h-[3px] w-[65%] rounded-full bg-[#f5f5f5]" />
    </div>
  );
}

function BrowserWindow() {
  return (
    <section className="flex min-w-0 flex-1 flex-col">
      <TabStrip />
      <NavBar />
      <BookmarksBar />
      <Report />
    </section>
  );
}

export default function App() {
  return (
    <div className="flex h-screen flex-col overflow-hidden bg-[#1d1d1d] font-['Ubuntu','Noto_Sans',sans-serif]">
      <TopBar />
      <div className="flex min-h-0 flex-1">
        <Dock />
        <CodeWindow />
        <BrowserWindow />
      </div>
    </div>
  );
}
